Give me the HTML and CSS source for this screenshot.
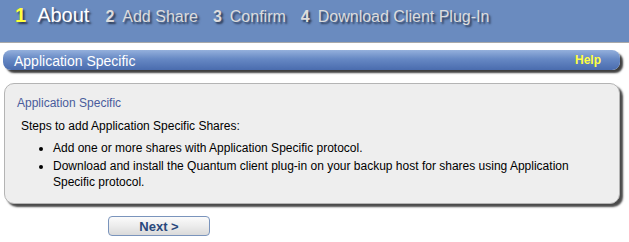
FILE: index.html
```html
<!DOCTYPE html>
<html lang="en">
<head>
    <meta charset="UTF-8">
    <title>Application Specific</title>
    <link rel="stylesheet" href="styles.css">
</head>
<body>
    <!-- Шаги мастера -->
    <div class="wizard-steps">
        <div class="step current"><span class="num">1</span><span class="label">About</span></div>
        <div class="step"><span class="num">2</span><span class="label">Add Share</span></div>
        <div class="step"><span class="num">3</span><span class="label">Confirm</span></div>
        <div class="step"><span class="num">4</span><span class="label">Download Client Plug-In</span></div>
    </div>

    <div class="page">
        <!-- Заголовок раздела -->
        <div class="title-bar">
            <span class="title">Application Specific</span>
            <a class="help" href="#">Help</a>
        </div>

        <!-- Описание -->
        <div class="info-box">
            <div class="info-head">Application Specific</div>
            <p class="info-text">Steps to add Application Specific Shares:</p>
            <ul class="info-list">
                <li>Add one or more shares with Application Specific protocol.</li>
                <li>Download and install the Quantum client plug-in on your backup host for shares using Application Specific protocol.</li>
            </ul>
        </div>

        <div class="actions">
            <button class="btn-next">Next &gt;</button>
        </div>
    </div>
</body>
</html>
```

FILE: styles.css
```css
/* Основные стили */
body {
    margin: 0;
    padding: 0;
    background-color: #fff;
    font-family: "Liberation Sans", Arial, sans-serif;
    color: #000;
}

/* Шаги мастера */
.wizard-steps {
    display: flex;
    align-items: baseline;
    gap: 15px;
    height: 37px;
    padding: 5px 0 0 15px;
    background-color: #6a8bbf;
    border-bottom: 1px solid #a9a9a9;
    line-height: 20px;
    text-shadow: 2px 2px 2px #2c3a55;
}

.step {
    display: flex;
    align-items: baseline;
    gap: 8px;
    font-size: 16px;
    color: #dcdcdc;
}

.step .num {
    font-weight: bold;
}

.step.current {
    font-size: 20px;
    gap: 11px;
    margin-right: 1px;
}

.step.current .num {
    color: #ffff3c;
}

.step.current .label {
    color: #fff;
}

/* Контент */
.page {
    padding: 7px 9px 0 3px;
}

.title-bar {
    display: flex;
    justify-content: space-between;
    align-items: center;
    height: 20px;
    padding: 0 19px 0 11px;
    border-radius: 8px;
    background: linear-gradient(to bottom, #94b0dc 0%, #6688c4 45%, #4a6cae 100%);
    box-shadow: 3px 3px 2px #3f3f3f;
}

.title {
    color: #fff;
    font-size: 14px;
    padding-top: 1px;
}

.help {
    color: #ffff40;
    font-size: 12px;
    font-weight: bold;
    text-decoration: none;
}

.info-box {
    margin: 13px 0 0 1px;
    padding: 11px 12px 13px 12px;
    background-color: #eee;
    border: 1px solid #b4b4b4;
    border-radius: 10px;
    box-shadow: 3px 3px 2px #4a4a4a;
    font-size: 12px;
    line-height: 16px;
}

.info-head {
    color: #4a5c9c;
}

.info-text {
    margin: 7px 0 0 4px;
}

.info-list {
    margin: 6px 0 0 0;
    padding-left: 36px;
}

.info-list li {
    margin-bottom: 2px;
}

.info-list li:last-child {
    margin-bottom: 0;
}

/* Кнопка */
.actions {
    padding: 12px 0 0 105px;
}

.btn-next {
    width: 102px;
    height: 20px;
    padding: 0;
    border: 1px solid #7a94bc;
    border-radius: 4px;
    background: linear-gradient(to bottom, #fbfbfb 0%, #ececec 50%, #dadada 100%);
    color: #29487c;
    font-family: "Liberation Sans", Arial, sans-serif;
    font-size: 13px;
    font-weight: bold;
    cursor: pointer;
}
```
